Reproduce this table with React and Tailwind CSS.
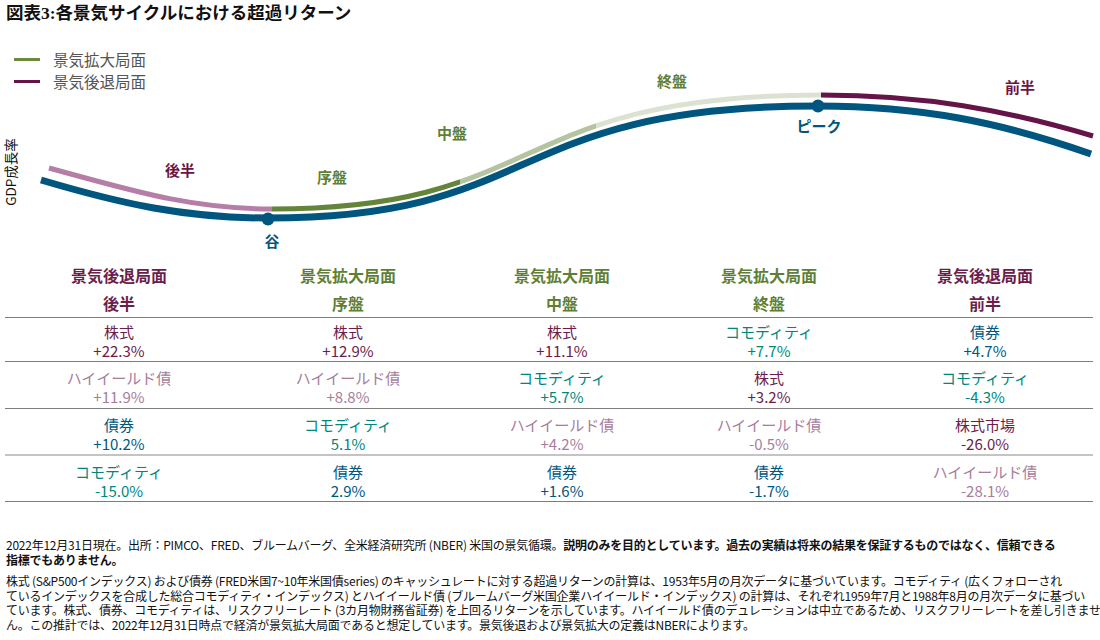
import React from "react";

const MAROON = "#6b1d4b";
const GREEN = "#5f7f37";
const BLUE = "#00587f";
const TEAL = "#00877b";
const MAUVE = "#a77d9b";

const assetColor = {
  "株式": MAROON,
  "株式市場": MAROON,
  "ハイイールド債": MAUVE,
  "債券": BLUE,
  "コモディティ": TEAL,
};

const cols = [
  { phase: "景気後退局面", sub: "後半", color: MAROON, items: [["株式", "+22.3%"], ["ハイイールド債", "+11.9%"], ["債券", "+10.2%"], ["コモディティ", "-15.0%"]] },
  { phase: "景気拡大局面", sub: "序盤", color: GREEN, items: [["株式", "+12.9%"], ["ハイイールド債", "+8.8%"], ["コモディティ", "5.1%"], ["債券", "2.9%"]] },
  { phase: "景気拡大局面", sub: "中盤", color: GREEN, items: [["株式", "+11.1%"], ["コモディティ", "+5.7%"], ["ハイイールド債", "+4.2%"], ["債券", "+1.6%"]] },
  { phase: "景気拡大局面", sub: "終盤", color: GREEN, items: [["コモディティ", "+7.7%"], ["株式", "+3.2%"], ["ハイイールド債", "-0.5%"], ["債券", "-1.7%"]] },
  { phase: "景気後退局面", sub: "前半", color: MAROON, items: [["債券", "+4.7%"], ["コモディティ", "-4.3%"], ["株式市場", "-26.0%"], ["ハイイールド債", "-28.1%"]] },
];

const rowStyles = [
  "pt-[4px] pb-[1px] border-b border-[#7d7d7d]",
  "pt-[6px] pb-[2px] border-b border-[#7d7d7d]",
  "pt-[6px] pb-[1px] border-b-2 border-[#c4c4c4]",
  "pt-[6px] pb-[1px] border-b border-[#7d7d7d]",
];

const GRID = "grid grid-cols-[228px_230px_198px_216px_216px]";

const UPPER = "M49,168 C 130,190 190,209 272,209 C 548,209 506,95 821,95 C 925,95 1005,110 1093,136";
const LOWER = "M41,180 C 122,204 185,218 268,218 C 544,218 503,106 818,106 C 920,106 1000,122 1091,154";

function Chart() {
  const segs = [
    { x: 0, w: 272, c: "#b57ea6" },
    { x: 272, w: 188, c: "#63843a" },
    { x: 460, w: 136, c: "#b5c4a0" },
    { x: 596, w: 225, c: "#dbe2d2" },
    { x: 821, w: 279, c: "#641446" },
  ];
  const label = "font-['Noto_Sans_CJK_JP',sans-serif]";
  return (
    <svg className="absolute left-0 top-0" width="1100" height="261" viewBox="0 0 1100 261">
      <defs>
        {segs.map((s, i) => (
          <clipPath id={`seg${i}`} key={i}>
            <rect x={s.x} y="0" width={s.w} height="261" />
          </clipPath>
        ))}
      </defs>
      {segs.map((s, i) => (
        <path key={i} d={UPPER} fill="none" stroke={s.c} strokeWidth="5" clipPath={`url(#seg${i})`} />
      ))}
      <path d={LOWER} fill="none" stroke="#00567e" strokeWidth="7" />
      <circle cx="268" cy="219" r="6.5" fill="#00567e" />
      <circle cx="818" cy="106" r="6.5" fill="#00567e" />
      <g className={label} fontWeight="700" fontSize="15" textAnchor="middle">
        <text x="180" y="176" fill="#6b1446">後半</text>
        <text x="332" y="183" fill={GREEN}>序盤</text>
        <text x="452" y="139" fill={GREEN}>中盤</text>
        <text x="672" y="87" fill={GREEN}>終盤</text>
        <text x="1020" y="93" fill="#6b1446">前半</text>
        <text x="272" y="247" fill="#00567e">谷</text>
        <text x="819" y="132" fill="#00567e">ピーク</text>
      </g>
      <text
        className={label}
        x="0"
        y="0"
        fontSize="13.5"
        textAnchor="middle"
        fill="#111"
        transform="translate(16,172) rotate(-90)"
      >
        GDP成長率
      </text>
    </svg>
  );
}

export default function App() {
  return (
    <div className="w-[1100px] h-[640px] bg-white overflow-hidden font-['Noto_Sans_CJK_JP',sans-serif] text-[#111]">
      <div className="relative h-[261px]">
        <div className="pl-[6px] pt-[3px] text-[17.5px] leading-[21px] font-bold text-[#111] font-['Liberation_Serif','Noto_Sans_CJK_JP',serif]">
          図表3:各景気サイクルにおける超過リターン
        </div>
        <div className="mt-[24px] pl-[14px] flex flex-col text-[15.5px] leading-[22px] text-[#555]">
          <div className="flex items-center">
            <span className="w-[26px] h-[3px] bg-[#6a8a3e]" />
            <span className="ml-[13px]">景気拡大局面</span>
          </div>
          <div className="flex items-center">
            <span className="w-[26px] h-[3px] bg-[#641446]" />
            <span className="ml-[13px]">景気後退局面</span>
          </div>
        </div>
        <Chart />
      </div>

      <div className="ml-[5px] w-[1088px]">
        <div className={`${GRID} border-b border-[#7d7d7d]`}>
          {cols.map((c, i) => (
            <div key={i} className="flex flex-col items-center text-[16px] leading-[28px] font-bold" style={{ color: c.color }}>
              <span>{c.phase}</span>
              <span>{c.sub}</span>
            </div>
          ))}
        </div>
        {[0, 1, 2, 3].map((r) => (
          <div key={r} className={`${GRID} ${rowStyles[r]}`}>
            {cols.map((c, i) => {
              const [name, val] = c.items[r];
              return (
                <div key={i} className="flex flex-col items-center text-[15px] leading-[19px]" style={{ color: assetColor[name] }}>
                  <span>{name}</span>
                  <span>{val}</span>
                </div>
              );
            })}
          </div>
        ))}
      </div>

      <div className="mt-[36px] px-[6px] text-[12px] leading-[14.5px] text-[#111] tracking-[-0.24px]">
        <div className="whitespace-nowrap">
          2022年12月31日現在。出所：PIMCO、FRED、ブルームバーグ、全米経済研究所 (NBER) 米国の景気循環。
          <span className="font-bold">説明のみを目的としています。過去の実績は将来の結果を保証するものではなく、信頼できる</span>
        </div>
        <div className="whitespace-nowrap font-bold">指標でもありません。</div>
        <div className="mt-[7px]">
          <div className="whitespace-nowrap">株式 (S&amp;P500インデックス) および債券 (FRED米国7~10年米国債series) のキャッシュレートに対する超過リターンの計算は、1953年5月の月次データに基づいています。コモディティ (広くフォローされ</div>
          <div className="whitespace-nowrap">ているインデックスを合成した総合コモディティ・インデックス) とハイイールド債 (ブルームバーグ米国企業ハイイールド・インデックス) の計算は、それぞれ1959年7月と1988年8月の月次データに基づい</div>
          <div className="whitespace-nowrap">ています。株式、債券、コモディティは、リスクフリーレート (3カ月物財務省証券) を上回るリターンを示しています。ハイイールド債のデュレーションは中立であるため、リスクフリーレートを差し引きませ</div>
          <div className="whitespace-nowrap">ん。この推計では、2022年12月31日時点で経済が景気拡大局面であると想定しています。景気後退および景気拡大の定義はNBERによります。</div>
        </div>
      </div>
    </div>
  );
}
